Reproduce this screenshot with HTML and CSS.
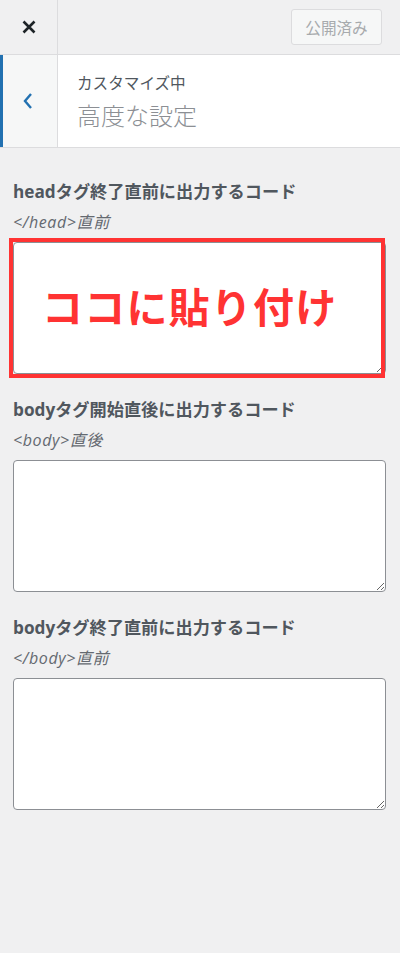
FILE: index.html
```html
<!DOCTYPE html>
<html lang="ja">

<head>
    <meta charset="UTF-8">
    <meta name="viewport" content="width=device-width, initial-scale=1.0">
    <title>高度な設定</title>
    <link rel="stylesheet" href="styles.css">
</head>

<body>
    <header class="topbar">
        <button class="close-btn" aria-label="閉じる">
            <svg width="14" height="14" viewBox="0 0 14 14">
                <path d="M1.5 1.5 L12.5 12.5 M12.5 1.5 L1.5 12.5" stroke="#1d2327" stroke-width="2.6" fill="none" />
            </svg>
        </button>
        <button class="publish-btn" disabled>公開済み</button>
    </header>

    <div class="section-head">
        <button class="back-btn" aria-label="戻る">
            <svg width="10" height="18" viewBox="0 0 10 18">
                <path d="M8 2 L2 9 L8 16" stroke="#2271b1" stroke-width="2.4" fill="none" />
            </svg>
        </button>
        <div class="section-title">
            <span class="customize-action">カスタマイズ中</span>
            <h3>高度な設定</h3>
        </div>
    </div>

    <ul class="controls">
        <li class="control">
            <label class="control-label">headタグ終了直前に出力するコード</label>
            <span class="description">&lt;/head&gt;直前</span>
            <div class="textarea-wrap">
                <textarea rows="5"></textarea>
                <div class="highlight">ココに貼り付け</div>
            </div>
        </li>
        <li class="control">
            <label class="control-label">bodyタグ開始直後に出力するコード</label>
            <span class="description">&lt;body&gt;直後</span>
            <div class="textarea-wrap">
                <textarea rows="5"></textarea>
            </div>
        </li>
        <li class="control">
            <label class="control-label">bodyタグ終了直前に出力するコード</label>
            <span class="description">&lt;/body&gt;直前</span>
            <div class="textarea-wrap">
                <textarea rows="5"></textarea>
            </div>
        </li>
    </ul>
</body>

</html>
```

FILE: styles.css
```css
body {
    margin: 0;
    padding: 0;
    background: #f0f0f1;
    font-family: 'Open Sans', 'Noto Sans CJK JP', sans-serif;
    color: #50575e;
}

.topbar {
    height: 54px;
    display: flex;
    align-items: center;
    border-bottom: 1px solid #dcdcde;
    background: #f0f0f1;
}

.close-btn {
    width: 58px;
    height: 54px;
    padding: 0;
    border: none;
    border-right: 1px solid #dcdcde;
    background: transparent;
    display: flex;
    align-items: center;
    justify-content: center;
}

.publish-btn {
    margin-left: auto;
    margin-right: 18px;
    width: 91px;
    height: 36px;
    padding: 0;
    border: 1px solid #dcdcde;
    border-radius: 3px;
    background: #f6f7f7;
    color: #a7aaad;
    font-family: 'Open Sans', 'Noto Sans CJK JP', sans-serif;
    font-size: 15.6px;
}

.section-head {
    height: 92px;
    display: flex;
    background: #fff;
    border-bottom: 1px solid #dcdcde;
}

.back-btn {
    box-sizing: border-box;
    width: 58px;
    height: 92px;
    padding: 0 4px 0 0;
    border: none;
    border-left: 3px solid #2271b1;
    border-right: 1px solid #dcdcde;
    background: #f6f7f7;
    display: flex;
    align-items: center;
    justify-content: center;
}

.section-title {
    display: flex;
    flex-direction: column;
    padding: 18px 0 0 19px;
}

.customize-action {
    font-size: 15.6px;
    line-height: 20px;
    color: #50575e;
}

.section-title h3 {
    margin: 8px 0 0;
    font-size: 24px;
    line-height: 30px;
    font-weight: 300;
    color: #8c8f94;
}

.controls {
    list-style: none;
    margin: 0;
    padding: 32px 14px 0 13px;
}

.control {
    display: flex;
    flex-direction: column;
    margin-bottom: 24px;
}

.control-label {
    font-size: 17.2px;
    line-height: 24px;
    font-weight: bold;
    color: #50575e;
}

.description {
    margin-top: 7px;
    font-size: 16px;
    line-height: 22px;
    font-style: italic;
    letter-spacing: 0.6px;
    color: #646970;
}

.textarea-wrap {
    position: relative;
    margin-top: 9px;
}

.textarea-wrap textarea {
    display: block;
    box-sizing: border-box;
    width: 100%;
    height: 132px;
    border: 1px solid #8c8f94;
    border-radius: 4px;
    background: #fff;
    resize: vertical;
}

/* 注釈の赤枠 */
.highlight {
    position: absolute;
    top: -4px;
    left: -4px;
    right: 1px;
    bottom: -4px;
    border: 4px solid #ff3333;
    display: flex;
    align-items: center;
    padding: 0 0 6px 29px;
    font-family: 'Noto Sans CJK JP', sans-serif;
    font-size: 41px;
    font-weight: bold;
    letter-spacing: 1.2px;
    color: #ff3333;
    pointer-events: none;
}
```
